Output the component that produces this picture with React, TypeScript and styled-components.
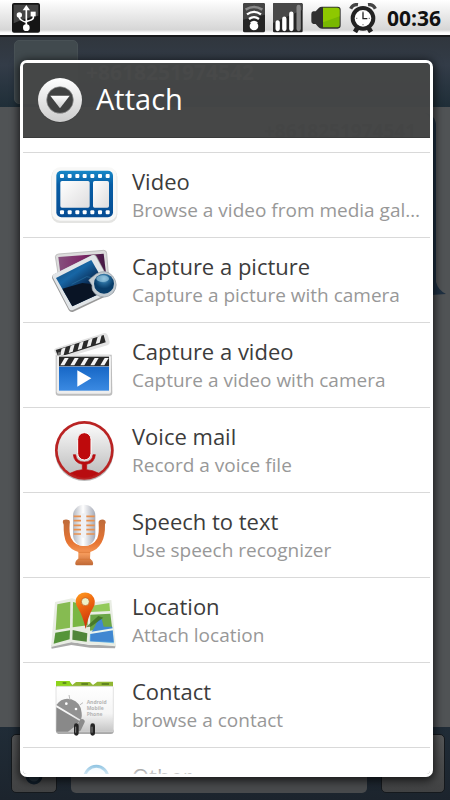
import React from "react";
import styled, { createGlobalStyle } from "styled-components";

const GlobalStyle = createGlobalStyle`
  * { box-sizing: border-box; }
  body { margin: 0; font-family: "Open Sans", "Noto Sans", sans-serif; background: #505355; }
  button, input { font: inherit; }
`;

const Screen = styled.div`
  position: relative;
  display: flex;
  flex-direction: column;
  height: 100vh;
  overflow: hidden;
`;

const StatusBar = styled.header`
  display: flex;
  align-items: center;
  height: 37px;
  flex: none;
  padding: 0 9px 0 12px;
  background: linear-gradient(#fff 0%, #f0f0f0 30%, #d6d6d6 85%, #fff 94%);
  border-bottom: 2px solid #181a1c;
  svg { display: block; }
`;

const StatusIcons = styled.div`
  display: flex;
  align-items: center;
  gap: 8px;
  margin-left: auto;
`;

const Clock = styled.time`
  margin-left: 10px;
  font-size: 21px;
  line-height: 34px;
  font-weight: 700;
  color: #111;
`;

const ChatHeader = styled.div`
  display: flex;
  gap: 8px;
  height: 70px;
  flex: none;
  padding: 3px 14px;
  background: linear-gradient(#30363d, #333c48 40%, #1f2e38);
`;

const Avatar = styled.div`
  width: 64px;
  height: 64px;
  border-radius: 5px;
  background: #414a4e;
  border: 1px solid #485155;
`;

const ContactNumber = styled.div`
  padding-top: 16px;
  font-size: 21px;
  line-height: 32px;
  font-weight: 700;
  color: #727678;
`;

const Conversation = styled.div`
  flex: 1;
  min-height: 0;
  padding: 6px 14px 0 7px;
  background: #505355;
`;

const Bubble = styled.div`
  position: relative;
  height: 180px;
  padding: 5px 15px;
  border-right: 5px solid #1f3042;
  border-radius: 0 12px 0 0;
  text-align: right;
  font-size: 19px;
  line-height: 26px;
  font-weight: 700;
  color: #252729;
`;

const BubbleTail = styled.svg`
  position: absolute;
  right: -15px;
  bottom: -3px;
`;

const Composer = styled.form`
  display: flex;
  gap: 14px;
  height: 73px;
  flex: none;
  padding: 7px 5px 7px 11px;
  background: linear-gradient(#202c37, #1c242d);
`;

const ComposerButton = styled.button<{ $width: number }>`
  display: flex;
  align-items: flex-end;
  justify-content: center;
  width: ${(p) => p.$width}px;
  padding: 0 0 7px;
  border: 1px solid #15191d;
  border-radius: 5px;
  background: linear-gradient(#555657, #414243);
`;

const MessageInput = styled.input`
  flex: 1;
  min-width: 0;
  border: 0;
  border-radius: 5px;
  background: #484a4c;
`;

const Dialog = styled.section`
  position: absolute;
  inset: 60px 17px 23px 20px;
  display: flex;
  flex-direction: column;
  overflow: hidden;
  border: 3px solid #fff;
  border-radius: 7px;
  box-shadow: 0 2px 8px 2px rgba(0, 0, 0, 0.65);
`;

const DialogHeader = styled.div`
  display: flex;
  align-items: center;
  gap: 13px;
  height: 75px;
  flex: none;
  padding: 0 14px;
  background: rgba(70, 71, 71, 0.95);
  border-bottom: 1px solid #3a3b3b;
  svg { display: block; }
`;

const DialogTitle = styled.h1`
  margin: 0;
  padding-bottom: 3px;
  font-size: 29px;
  line-height: 40px;
  font-weight: 400;
  color: #fff;
`;

const ListViewport = styled.div`
  position: relative;
  flex: 1;
  min-height: 0;
  overflow: hidden;
  background: #fff;
`;

const Fade = styled.div`
  position: absolute;
  inset: auto 0 0;
  height: 16px;
  background: linear-gradient(rgba(255, 255, 255, 0.1), rgba(255, 255, 255, 0.75));
`;

const Options = styled.ul`
  margin: 0;
  padding: 14px 0 0;
  list-style: none;
`;

const Option = styled.li`
  border-top: 1px solid #d9d9d9;
`;

const OptionButton = styled.button`
  display: flex;
  gap: 12px;
  width: 100%;
  height: 84px;
  padding: 0 8px 0 25px;
  border: 0;
  background: transparent;
  text-align: left;
`;

const OptionIcon = styled.svg`
  width: 72px;
  height: 84px;
  flex: none;
`;

const OptionText = styled.span`
  display: block;
  flex: 1;
  min-width: 0;
  padding-top: 13px;
`;

const OptionName = styled.span`
  display: block;
  font-size: 22px;
  line-height: 30px;
  color: #3c3c3c;
`;

const OptionHint = styled.span`
  display: block;
  overflow: hidden;
  text-overflow: ellipsis;
  white-space: nowrap;
  font-size: 19px;
  line-height: 28px;
  color: #989898;
`;

const holes = [186, 209, 232, 254, 277, 300, 323];

const VideoArt = () => (
  <>
    <rect x="154" y="84" width="198" height="165" rx="26" fill="#e4e4e2" />
    <rect x="156" y="82" width="194" height="160" rx="24" fill="#f8f8f7" />
    <rect x="169" y="92" width="170" height="140" rx="15" fill="url(#film)" />
    {holes.map((x) => (
      <g key={x} fill="#fff">
        <rect x={x - 6} y="102" width="12" height="12" rx="3" />
        <rect x={x - 6} y="211" width="12" height="12" rx="3" />
      </g>
    ))}
    <rect x="181" y="123" width="88" height="80" rx="5" fill="url(#frame)" />
    <rect x="279" y="123" width="48" height="80" rx="5" fill="url(#frame)" />
  </>
);

const PictureArt = () => (
  <>
    <path d="M166 350 Q167 343 175 342 L311 331 Q319 331 320 339 L327 425 L180 437Z" fill="#dcdcdc" stroke="#aaa" strokeWidth="2" />
    <path d="M175 351 L311 341 L318 400 L181 400Z" fill="url(#plum)" />
    <path d="M157 416 Q154 407 162 403 L276 345 Q285 341 290 349 L342 447 Q346 456 337 460 L220 515 Q211 518 206 510Z" fill="#999" />
    <path d="M159 413 Q156 405 164 401 L276 346 Q284 342 288 350 L339 444 Q343 452 335 456 L219 510 Q211 513 207 506Z" fill="#e1e5e8" />
    <path d="M168 414 L274 360 L325 449 L217 499Z" fill="url(#night)" />
    <path d="M187 446 L247 429 L273 432 L290 465 L217 499Z" fill="#091425" />
    <path d="M215 433 L260 410 L309 420" stroke="#2d7dab" strokeWidth="3" fill="none" opacity=".5" />
    <path d="M266 420 L288 402 Q318 385 338 408 Q359 435 338 460 Q315 481 287 463 Q273 452 276 436Z" fill="#c3cbd1" stroke="#8e979f" strokeWidth="2" />
    <circle cx="312" cy="431" r="30" fill="url(#lens)" />
    <ellipse cx="308" cy="416" rx="19" ry="10" fill="#9ccbe2" opacity=".65" />
  </>
);

const ClapperArt = () => (
  <>
    <path d="M167 104 L335 104 L337 218 Q337 227 328 227 L176 227 Q167 227 167 218Z" fill="#bdbdbd" />
    <path d="M162 92 Q162 86 169 84 L310 40 Q321 37 324 47 L329 66 Q330 73 322 76 L176 119Z" fill="#e3e3e3" />
    <path d="M167 90 L311 45 L317 67 L175 112Z" fill="#292929" />
    {[0, 1, 2, 3, 4].map((i) => (
      <path key={i} d={`M${179 + i * 27} ${108 - i * 9} L${185 + i * 27} ${86 - i * 9} l12 -4 L${191 + i * 27} ${104 - i * 9}Z`} fill="#eee" />
    ))}
    <circle cx="178" cy="101" r="5" fill="#777" />
    <rect x="170" y="106" width="163" height="115" rx="6" fill="#eee" />
    <rect x="177" y="110" width="150" height="29" fill="#282828" />
    {[181, 211, 241, 271, 301].map((x) => (
      <path key={x} d={`M${x} 136 l13 -22 h12 l-13 22Z`} fill="#f5f5f5" />
    ))}
    <rect x="177" y="140" width="150" height="72" fill="url(#blue)" />
    <path d="M232 151 L274 175 L232 200Z" fill="#fff" />
  </>
);

const VoiceArt = () => (
  <>
    <circle cx="253" cy="396" r="88" fill="#bbb" />
    <circle cx="253" cy="392" r="88" fill="#b92323" />
    <circle cx="253" cy="392" r="80" fill="url(#silver)" />
    <path d="M210 461 Q229 451 247 450 L247 434 Q222 429 220 405 L227 405 Q229 427 253 427 Q277 427 279 405 L286 405 Q284 429 260 434 L260 450 Q278 451 297 461 Q254 486 210 461Z" fill="#b80d10" stroke="#b80d10" strokeWidth="2" />
    <rect x="233" y="339" width="40" height="82" rx="20" fill="#be0a0c" stroke="#fff" strokeWidth="3" />
  </>
);

const SpeechArt = () => (
  <>
    <path d="M190 91 Q199 87 208 92 Q211 97 209 103 Q207 129 213 145 Q225 169 252 169 Q280 169 292 146 Q298 130 296 104 Q294 95 299 92 Q308 87 316 93 Q319 99 315 104 Q316 141 304 160 Q293 180 271 187 L270 207 L277 213 Q283 227 274 227 L231 227 Q222 226 228 213 L235 207 L235 187 Q211 180 200 160 Q190 141 191 105 Q186 96 190 91Z" fill="url(#orange)" />
    <path d="M236 188 H270 M233 209 H272" stroke="#d77434" strokeWidth="2" />
    <rect x="219" y="45" width="67" height="124" rx="33" fill="url(#mic)" />
    {[80, 93, 107, 120, 133].map((y) => (
      <path key={y} d={`M221 ${y} h22 M259 ${y} h25`} stroke="#e9914f" strokeWidth="5" />
    ))}
    <rect x="244" y="71" width="14" height="73" rx="5" fill="#f0f1f4" />
  </>
);

const MapArt = () => (
  <>
    <path d="M153 467 L214 457 L265 465 L347 467 L345 476 L270 474 L214 466 L155 477Z" fill="#aaa" />
    <path d="M165 337 L216 326 L266 339 L334 331 L348 470 L265 464 L214 458 L153 472Z" fill="#e9ede4" />
    <path d="M172 344 L211 336 L210 414 L167 421Z" fill="#86bb51" />
    <path d="M219 337 L263 348 L263 407 L218 413Z" fill="#79b744" />
    <path d="M271 349 L328 340 L330 364 L271 367Z" fill="#93ca59" />
    <path d="M271 375 L331 372 L336 412 L270 423Z" fill="#6ba647" />
    <path d="M166 429 L210 422 L209 449 L161 462Z" fill="#559439" />
    <path d="M218 421 L262 431 L260 456 L217 450Z" fill="#50863a" />
    <path d="M270 431 L338 421 L342 461 L269 455Z" fill="#6fb8e5" />
    <path d="M271 455 L272 432 L285 410 Q292 388 305 387 L311 411 L337 411 L341 457Z" fill="#4087d1" />
    <path d="M270 430 L339 419" stroke="#e9f4ef" strokeWidth="6" />
    <path d="M257 413 L295 379 L310 384 L272 411Z" fill="#38661f" opacity=".7" />
    <path d="M257 418 Q249 380 234 356 Q219 332 236 315 Q255 302 275 315 Q292 333 279 355 Q264 381 257 418Z" fill="url(#pin)" />
    <circle cx="256" cy="336" r="12" fill="#eef0c7" stroke="#b74d10" strokeWidth="2" />
  </>
);

const CardText = styled.text`
  font-size: 15px;
  font-weight: 700;
  fill: #b5b5b5;
`;

const ContactArt = () => (
  <>
    <path d="M168 225 H341 V232 Q340 238 333 238 H175 Q168 237 168 230Z" fill="#aaa" />
    <path d="M168 79 H208 L217 91 L228 82 H270 L279 91 L292 81 H339 V100 H168Z" fill="#91b733" />
    <path d="M168 79 H208 L216 95 H168Z" fill="#8ed41b" />
    <path d="M188 85 h11 M244 88 h20 M305 88 h22" stroke="#51751d" strokeWidth="5" fill="none" />
    <rect x="168" y="95" width="172" height="136" rx="4" fill="url(#card)" stroke="#d5d5d5" strokeWidth="2" />
    <path d="M169 151 Q187 126 214 134 Q242 143 245 174 Q247 185 243 196Z" fill="#929292" />
    <path d="M169 158 L239 199 Q224 218 204 231 L169 231Z" fill="#898989" />
    <path d="M207 121 L210 136 M239 151 L249 144" stroke="#bbb" strokeWidth="3" />
    <circle cx="199" cy="147" r="4" fill="#fff" />
    <circle cx="228" cy="163" r="4" fill="#fff" />
    <path d="M246 201 L236 222" stroke="#8b8b8b" strokeWidth="16" strokeLinecap="round" />
    <CardText x="260" y="147">Android</CardText>
    <CardText x="260" y="165">Mobile</CardText>
    <CardText x="260" y="184">Phone</CardText>
    <path d="M229 213 V236 M278 213 V236" stroke="#242424" strokeWidth="14" strokeLinecap="round" />
    <path d="M227 216 V234 M276 216 V234" stroke="#888" strokeWidth="3" />
  </>
);

const OtherArt = () => <circle cx="289" cy="371" r="35" fill="#eaf6fc" stroke="#4a9fd0" strokeWidth="9" />;

const ArtDefs = () => (
  <defs>
    <linearGradient id="film" x2="0" y2="1"><stop stopColor="#1688c8" /><stop offset=".3" stopColor="#075da5" /><stop offset="1" stopColor="#064d94" /></linearGradient>
    <linearGradient id="frame" x2="1" y2="1"><stop stopColor="#fff" /><stop offset="1" stopColor="#deddde" /></linearGradient>
    <linearGradient id="plum"><stop stopColor="#86517e" /><stop offset=".5" stopColor="#7d2867" /><stop offset="1" stopColor="#411842" /></linearGradient>
    <linearGradient id="night" x2=".8" y2="1"><stop stopColor="#124570" /><stop offset=".35" stopColor="#1766a5" /><stop offset=".6" stopColor="#0a2e58" /><stop offset="1" stopColor="#0b3a68" /></linearGradient>
    <radialGradient id="lens" cy=".25"><stop stopColor="#83bddb" /><stop offset=".5" stopColor="#246797" /><stop offset="1" stopColor="#083c68" /></radialGradient>
    <linearGradient id="blue" x2="0" y2="1"><stop stopColor="#1767c6" /><stop offset="1" stopColor="#3b8ae2" /></linearGradient>
    <linearGradient id="silver" x2="0" y2="1"><stop stopColor="#fbfbfb" /><stop offset="1" stopColor="#bbb" /></linearGradient>
    <linearGradient id="orange" x2="0" y2="1"><stop stopColor="#bd6b3b" /><stop offset=".5" stopColor="#e77432" /><stop offset=".75" stopColor="#f59a5b" /><stop offset="1" stopColor="#bf6835" /></linearGradient>
    <linearGradient id="mic"><stop stopColor="#b4b8c1" /><stop offset=".45" stopColor="#fff" /><stop offset="1" stopColor="#a4a9b6" /></linearGradient>
    <linearGradient id="pin" x2=".3" y2="1"><stop stopColor="#ffa022" /><stop offset=".4" stopColor="#f06a10" /><stop offset="1" stopColor="#cc330c" /></linearGradient>
    <linearGradient id="card" x2="0" y2="1"><stop stopColor="#fff" /><stop offset=".6" stopColor="#f5f5f5" /><stop offset="1" stopColor="#c5c5c5" /></linearGradient>
  </defs>
);

const options = [
  { name: "Video", hint: "Browse a video from media gallery", box: "144 39 216 252", Art: VideoArt },
  { name: "Capture a picture", hint: "Capture a picture with camera", box: "144 294 216 252", Art: PictureArt },
  { name: "Capture a video", hint: "Capture a video with camera", box: "144 9 216 252", Art: ClapperArt },
  { name: "Voice mail", hint: "Record a voice file", box: "144 265 216 252", Art: VoiceArt },
  { name: "Speech to text", hint: "Use speech recognizer", box: "144 10 216 252", Art: SpeechArt },
  { name: "Location", hint: "Attach location", box: "144 265 216 252", Art: MapArt },
  { name: "Contact", hint: "browse a contact", box: "144 25 216 252", Art: ContactArt },
  { name: "Other", hint: "", box: "144 281 216 252", Art: OtherArt },
];

const UsbIcon = () => (
  <svg width="28" height="30" viewBox="0 0 84 90" role="img" aria-label="USB connected">
    <rect width="84" height="89" rx="6" fill="#151515" />
    <path d="M5 5 H79 V38 Q40 44 5 61Z" fill="#444" />
    <path d="M43 15 V73 M22 38 V44 Q24 52 42 58 M64 37 V45 Q62 51 44 55" fill="none" stroke="#fff" strokeWidth="5" />
    <path d="M43 6 L54 22 H32Z" fill="#fff" />
    <circle cx="22" cy="36" r="8" fill="#fff" />
    <rect x="56" y="26" width="15" height="14" fill="#fff" />
    <circle cx="43" cy="74" r="10" fill="#fff" />
  </svg>
);

const WifiIcon = () => (
  <svg width="22" height="30" viewBox="0 0 66 90" role="img" aria-label="Wi-Fi">
    <rect width="66" height="88" rx="5" fill="#252525" />
    <path d="M0 5 Q0 0 5 0 H61 Q66 0 66 5 V35 L0 50Z" fill="#444" />
    <path d="M8 20 Q33 4 58 20" fill="none" stroke="#888" strokeWidth="8" />
    <path d="M12 34 Q33 19 54 34 M18 48 Q33 37 48 48" fill="none" stroke="#fff" strokeWidth="7" />
    <circle cx="33" cy="69" r="13" fill="#fff" />
    <path d="M23 60 Q33 52 43 60" stroke="#fff" strokeWidth="5" fill="none" />
  </svg>
);

const SignalIcon = () => (
  <svg width="30" height="30" viewBox="0 0 90 90" role="img" aria-label="Signal strength">
    <rect width="89" height="88" rx="4" fill="#252525" />
    <path d="M0 4 Q0 0 5 0 H85 L89 5 V20 L0 60Z" fill="#484848" />
    <path d="M14 58 V78 M34 47 V78 M55 32 V78" stroke="#fff" strokeWidth="13" strokeLinecap="round" />
    <path d="M77 12 V78" stroke="#888" strokeWidth="13" strokeLinecap="round" />
  </svg>
);

const BatteryIcon = () => (
  <svg width="30" height="24" viewBox="0 0 90 72" role="img" aria-label="Battery">
    <path d="M14 16 L24 5 Q27 2 33 2 H80 Q89 2 89 11 V58 Q89 68 80 68 H33 Q26 68 22 63 L14 54 H7 Q1 54 1 46 V24 Q1 16 7 16Z" fill="#303030" />
    <path d="M36 5 H79 Q86 5 86 12 V57 Q86 64 79 64 H36Z" fill="#78b800" />
    <path d="M36 5 H79 Q86 5 86 12 V31 L36 49Z" fill="#a1d500" opacity=".55" />
  </svg>
);

const AlarmIcon = () => (
  <svg width="28" height="30" viewBox="0 0 84 90" role="img" aria-label="Alarm set">
    <path d="M5 17 Q12 3 27 5 M79 17 Q72 3 57 5" fill="none" stroke="#444" strokeWidth="10" />
    <path d="M25 75 L18 87 M59 75 L66 87" stroke="#222" strokeWidth="14" />
    <circle cx="42" cy="46" r="31" fill="#fff" stroke="#222" strokeWidth="12" />
    <path d="M42 28 V47 H55" stroke="#222" strokeWidth="4" fill="none" />
    <path d="M42 25 v4 M42 63 v4 M21 46 h4 M59 46 h4" stroke="#777" strokeWidth="3" />
  </svg>
);

const TitleIcon = () => (
  <svg width="46" height="46" viewBox="0 0 138 138" aria-hidden="true">
    <defs><linearGradient id="ring" x2="0" y2="1"><stop stopColor="#fff" /><stop offset="1" stopColor="#ccc" /></linearGradient></defs>
    <circle cx="69" cy="71" r="66" fill="#292929" opacity=".4" />
    <circle cx="69" cy="69" r="66" fill="url(#ring)" />
    <circle cx="69" cy="69" r="40" fill="#414242" stroke="#999" strokeWidth="2" />
    <path d="M40 56 H98 L69 94Z" fill="url(#ring)" />
  </svg>
);

export default function App() {
  return (
    <Screen>
      <GlobalStyle />
      <StatusBar>
        <UsbIcon />
        <StatusIcons>
          <WifiIcon />
          <SignalIcon />
          <BatteryIcon />
          <AlarmIcon />
        </StatusIcons>
        <Clock>00:36</Clock>
      </StatusBar>
      <ChatHeader>
        <Avatar />
        <ContactNumber>+8618251974542</ContactNumber>
      </ChatHeader>
      <Conversation>
        <Bubble>
          +8618251974541
          <BubbleTail width="15" height="14" viewBox="0 0 15 14" aria-hidden="true">
            <path d="M0 0 H5 Q7 8 15 12 L0 13Z" fill="#1f3042" />
          </BubbleTail>
        </Bubble>
      </Conversation>
      <Composer>
        <ComposerButton type="button" $width={46} aria-label="Attach">
          <svg width="18" height="18" viewBox="0 0 18 18"><circle cx="9" cy="9" r="7" fill="#26343f" stroke="#101d29" strokeWidth="3" /></svg>
        </ComposerButton>
        <MessageInput aria-label="Message" />
        <ComposerButton type="button" $width={64} aria-label="Send" />
      </Composer>
      <Dialog role="dialog" aria-labelledby="attach-title">
        <DialogHeader>
          <TitleIcon />
          <DialogTitle id="attach-title">Attach</DialogTitle>
        </DialogHeader>
        <ListViewport>
          <Options>
            {options.map(({ name, hint, box, Art }) => (
              <Option key={name}>
                <OptionButton type="button">
                  <OptionIcon viewBox={box} aria-hidden="true">
                    {name === "Video" && <ArtDefs />}
                    <Art />
                  </OptionIcon>
                  <OptionText>
                    <OptionName>{name}</OptionName>
                    <OptionHint>{hint}</OptionHint>
                  </OptionText>
                </OptionButton>
              </Option>
            ))}
          </Options>
          <Fade />
        </ListViewport>
      </Dialog>
    </Screen>
  );
}
